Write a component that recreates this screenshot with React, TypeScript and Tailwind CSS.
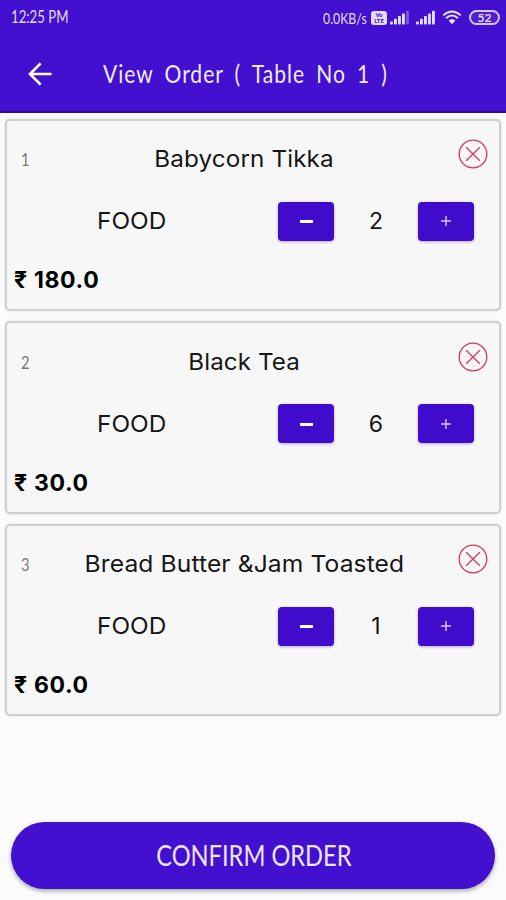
import { useState } from 'react'

interface OrderItem {
  id: number
  name: string
  category: string
  quantity: number
  price: string
  nameClass: string
}

const initialItems: OrderItem[] = [
  {
    id: 1,
    name: 'Babycorn Tikka',
    category: 'FOOD',
    quantity: 2,
    price: '180.0',
    nameClass: 'scale-x-[1.055] tracking-[0.1px]',
  },
  {
    id: 2,
    name: 'Black Tea',
    category: 'FOOD',
    quantity: 6,
    price: '30.0',
    nameClass: 'scale-x-[1.05] tracking-[0.1px]',
  },
  {
    id: 3,
    name: 'Bread Butter &Jam Toasted',
    category: 'FOOD',
    quantity: 1,
    price: '60.0',
    nameClass: 'scale-x-[1.07] tracking-[0.1px]',
  },
]

const SignalIcon = ({ bars }: { bars: number }) => (
  <svg width="19" height="15" viewBox="0 0 19 15" fill="#e4dcfb">
    {[0, 1, 2, 3, 4].map((i) => (
      <rect
        key={i}
        x={i * 4}
        y={11.5 - i * 2.7}
        width="2.9"
        height={3 + i * 2.7}
        rx="0.8"
        opacity={i < bars ? 1 : 0.35}
      />
    ))}
  </svg>
)

const WifiIcon = () => (
  <svg width="20" height="15" viewBox="0 0 20 15" fill="none" stroke="#e4dcfb">
    <path d="M1.2 5.4 Q10 -2.4 18.8 5.4" strokeWidth="1.7" />
    <path d="M4 8.2 Q10 2.6 16 8.2" strokeWidth="1.9" />
    <path d="M6.6 10.6 Q10 7.4 13.4 10.6 L10 14.2 Z" fill="#e4dcfb" stroke="none" />
  </svg>
)

const RemoveIcon = () => (
  <svg width="30" height="30" viewBox="0 0 30 30" fill="none" stroke="#d23a5e" strokeWidth="1.3">
    <circle cx="15" cy="15" r="13.8" />
    <path d="M8.2 8.2 L21.8 21.8 M21.8 8.2 L8.2 21.8" />
  </svg>
)

const StatusBar = () => (
  <div className="flex h-[35px] items-center pr-[6px] pl-[11px] text-[#e4dcfb]">
    <span className="origin-left scale-x-[0.8] text-[16.5px] whitespace-nowrap">12:25 PM</span>
    <div className="ml-auto flex items-center">
      <span className="w-[48px] text-[16px] whitespace-nowrap">
        <span className="inline-block origin-left scale-x-[0.77]">0.0KB/s</span>
      </span>
      <span className="flex h-[14px] w-[16px] flex-col items-center justify-center rounded-[3px] bg-[#e4dcfb] text-[6px] leading-[6px] font-black text-[#4310cf]">
        <span className="h-[6px] overflow-hidden">Vo</span>
        <span className="h-[6px] overflow-hidden">LTE</span>
      </span>
      <span className="ml-[3px]">
        <SignalIcon bars={4} />
      </span>
      <span className="ml-[7px]">
        <SignalIcon bars={5} />
      </span>
      <span className="ml-[7px]">
        <WifiIcon />
      </span>
      <span className="ml-[7px] flex h-[15px] w-[31px] items-center justify-center rounded-full border-2 border-[#d3c7f7] bg-[#4f20d2] text-[12px] leading-none font-bold">
        52
      </span>
    </div>
  </div>
)

const Header = () => (
  <header className="h-[113px] border-b-2 border-[#2c0a9e] bg-[#4310cf] text-[#f1ecff]">
    <StatusBar />
    <div className="flex h-[76px] items-center pl-[28px]">
      <button aria-label="Back" className="pt-px">
        <svg width="24" height="24" viewBox="0 0 24 24" fill="none" stroke="#fff" strokeWidth="2.7">
          <path d="M23.5 12 H2.5 M12.6 1.4 L2 12 L12.6 22.6" />
        </svg>
      </button>
      <h1 className="ml-[51px] origin-left scale-x-[0.825] text-[25.5px] tracking-[1.2px] whitespace-pre [word-spacing:5.8px]">
        View Order ( Table No 1 )
      </h1>
    </div>
  </header>
)

interface CardProps {
  item: OrderItem
  onChange: (id: number, amount: number) => void
  onRemove: (id: number) => void
}

const OrderCard = ({ item, onChange, onRemove }: CardProps) => {
  const buttonClass =
    'flex h-[39px] w-14 items-center justify-center rounded-[4px] bg-[#400bcb] shadow-[0_1px_3px_rgba(64,11,203,0.35)]'

  return (
    <div className="h-[192.5px] rounded-[5px] border-2 border-[#cfcfcf] bg-[#f7f7f7] px-px pt-px font-['Inter',sans-serif] text-[#161616] shadow-[0_0_2px_rgba(0,0,0,0.2)]">
      <div className="flex h-[76px] items-center">
        <span className="w-[34px] pl-[13px] font-['Lato',sans-serif] text-[18px] text-[#777]">
          <span className="inline-block origin-left scale-x-[0.82]">{item.id}</span>
        </span>
        <div className="flex w-[404px] justify-center text-[23px] whitespace-nowrap">
          <span className={item.nameClass}>{item.name}</span>
        </div>
        <button
          className="mb-[11px] ml-[12px]"
          aria-label="Remove item"
          onClick={() => onRemove(item.id)}
        >
          <RemoveIcon />
        </button>
      </div>
      <div className="flex h-[47px] items-center pl-[89px] text-[23px]">
        <span className="w-[181px] pt-px">
          <span className="inline-block origin-left scale-x-[1.06]">{item.category}</span>
        </span>
        <button
          className={buttonClass}
          aria-label="Decrease quantity"
          onClick={() => onChange(item.id, -1)}
        >
          <span className="mt-px h-[3px] w-[13px] bg-white" />
        </button>
        <span className="w-[84px] pt-px text-center">{item.quantity}</span>
        <button
          className={buttonClass}
          aria-label="Increase quantity"
          onClick={() => onChange(item.id, 1)}
        >
          <svg width="10" height="10" viewBox="0 0 10 10" stroke="#d9cdfb" strokeWidth="1.4">
            <path d="M5 0 V10 M0 5 H10" />
          </svg>
        </button>
      </div>
      <div className="flex h-[69px] items-center pt-[3px] pl-[6px] text-[23px] font-bold text-black">
        <span className="w-[20px]">₹</span>
        <span className="tracking-[0.6px]">{item.price}</span>
      </div>
    </div>
  )
}

const App = () => {
  const [items, setItems] = useState<OrderItem[]>(initialItems)

  const handleChange = (id: number, amount: number) =>
    setItems(
      items.map((item) =>
        item.id === id ? { ...item, quantity: Math.max(1, item.quantity + amount) } : item
      )
    )

  const handleRemove = (id: number) => setItems(items.filter((item) => item.id !== id))

  return (
    <div className="flex h-[900px] w-[506px] flex-col overflow-hidden bg-[#fbfbfb] font-['Lato',sans-serif]">
      <Header />
      <main className="flex flex-1 flex-col gap-[10px] px-[5px] pt-[5.5px]">
        {items.map((item) => (
          <OrderCard key={item.id} item={item} onChange={handleChange} onRemove={handleRemove} />
        ))}
      </main>
      <button className="mx-[11px] mb-[11px] flex h-[67px] items-center justify-center rounded-full bg-[#4310cf] pb-[2px] pl-[2px] text-[29px] text-[#ece5ff] shadow-[0_2px_4px_rgba(0,0,0,0.35)]">
        <span className="scale-x-[0.815]">CONFIRM ORDER</span>
      </button>
    </div>
  )
}

export default App
